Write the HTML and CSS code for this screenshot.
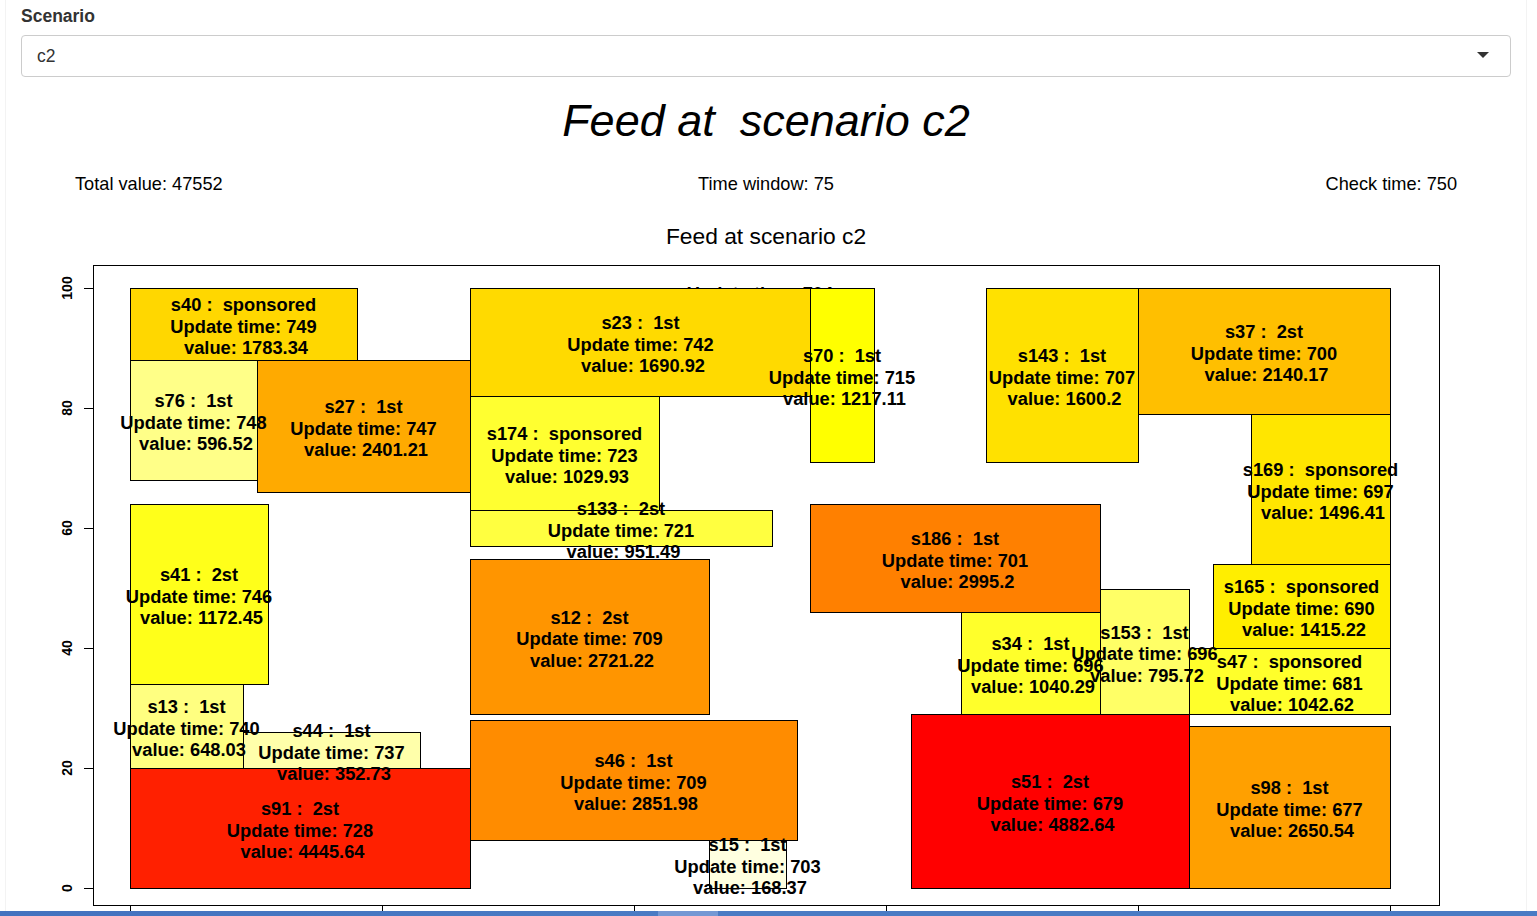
FILE: index.html
```html
<!DOCTYPE html>
<html>
<head>
<meta charset="utf-8">
<title>Feed at scenario c2</title>
<link rel="stylesheet" href="styles.css">
</head>
<body>
<div class="page">
  <label class="field-label">Scenario</label>
  <div class="select"><span class="select-value">c2</span><span class="caret"></span></div>
  <h2 class="title">Feed at  scenario c2</h2>
  <div class="stats">
    <span class="stat-left">Total value: 47552</span>
    <span class="stat-mid">Time window: 75</span>
    <span class="stat-right">Check time: 750</span>
  </div>
  <svg class="plot" viewBox="21 200 1490 711" width="1490" height="711" xmlns="http://www.w3.org/2000/svg">
    <text class="ptitle" x="766" y="244">Feed at scenario c2</text>
    <text class="lbl" x="760" y="300">Update time: 704</text>
    <g class="rects">
      <rect x="130.5" y="288.5" width="227" height="72" fill="#FFD700"/>
      <rect x="130.5" y="360.5" width="127" height="120" fill="#FFFF88"/>
      <rect x="257.5" y="360.5" width="213" height="132" fill="#FFAA00"/>
      <rect x="130.5" y="504.5" width="138" height="180" fill="#FFFF1A"/>
      <rect x="130.5" y="684.5" width="113" height="84" fill="#FFFF80"/>
      <rect x="243.5" y="732.5" width="177" height="36" fill="#FFFFAA"/>
      <rect x="130.5" y="768.5" width="340" height="120" fill="#FF2000"/>
      <rect x="470.5" y="288.5" width="341" height="108" fill="#FFDA00"/>
      <rect x="810.5" y="288.5" width="64" height="174" fill="#FFFF00"/>
      <rect x="470.5" y="396.5" width="189" height="114" fill="#FFFF30"/>
      <rect x="470.5" y="510.5" width="302" height="36" fill="#FFFF40"/>
      <rect x="470.5" y="559.5" width="239" height="155" fill="#FF9500"/>
      <rect x="709.5" y="840.5" width="77" height="48" fill="#FFFFE0"/>
      <rect x="470.5" y="720.5" width="327" height="120" fill="#FF8C00"/>
      <rect x="810.5" y="504.5" width="290" height="108" fill="#FF8000"/>
      <rect x="986.5" y="288.5" width="152" height="174" fill="#FFE100"/>
      <rect x="1138.5" y="288.5" width="252" height="126" fill="#FFBF00"/>
      <rect x="1251.5" y="414.5" width="139" height="150" fill="#FFE600"/>
      <rect x="1213.5" y="564.5" width="177" height="84" fill="#FFEE00"/>
      <rect x="1189.5" y="648.5" width="201" height="66" fill="#FFFF2B"/>
      <rect x="1100.5" y="589.5" width="89" height="125" fill="#FFFF66"/>
      <rect x="961.5" y="612.5" width="139" height="102" fill="#FFFF2B"/>
      <rect x="911.5" y="714.5" width="278" height="174" fill="#FF0000"/>
      <rect x="1189.5" y="726.5" width="201" height="162" fill="#FFA000"/>
    </g>
    <g class="labels">
      <text class="lbl" x="243.5" y="311"><tspan x="243.5">s40 :  sponsored</tspan><tspan x="243.5" dy="21.5">Update time: 749</tspan><tspan x="243.5" dy="21.5"> value: 1783.34</tspan></text>
      <text class="lbl" x="193.5" y="407"><tspan x="193.5">s76 :  1st</tspan><tspan x="193.5" dy="21.5">Update time: 748</tspan><tspan x="193.5" dy="21.5"> value: 596.52</tspan></text>
      <text class="lbl" x="363.5" y="413"><tspan x="363.5">s27 :  1st</tspan><tspan x="363.5" dy="21.5">Update time: 747</tspan><tspan x="363.5" dy="21.5"> value: 2401.21</tspan></text>
      <text class="lbl" x="199" y="581"><tspan x="199">s41 :  2st</tspan><tspan x="199" dy="21.5">Update time: 746</tspan><tspan x="199" dy="21.5"> value: 1172.45</tspan></text>
      <text class="lbl" x="186.5" y="713"><tspan x="186.5">s13 :  1st</tspan><tspan x="186.5" dy="21.5">Update time: 740</tspan><tspan x="186.5" dy="21.5"> value: 648.03</tspan></text>
      <text class="lbl" x="331.5" y="737"><tspan x="331.5">s44 :  1st</tspan><tspan x="331.5" dy="21.5">Update time: 737</tspan><tspan x="331.5" dy="21.5"> value: 352.73</tspan></text>
      <text class="lbl" x="300" y="815"><tspan x="300">s91 :  2st</tspan><tspan x="300" dy="21.5">Update time: 728</tspan><tspan x="300" dy="21.5"> value: 4445.64</tspan></text>
      <text class="lbl" x="640.5" y="329"><tspan x="640.5">s23 :  1st</tspan><tspan x="640.5" dy="21.5">Update time: 742</tspan><tspan x="640.5" dy="21.5"> value: 1690.92</tspan></text>
      <text class="lbl" x="842" y="362"><tspan x="842">s70 :  1st</tspan><tspan x="842" dy="21.5">Update time: 715</tspan><tspan x="842" dy="21.5"> value: 1217.11</tspan></text>
      <text class="lbl" x="564.5" y="440"><tspan x="564.5">s174 :  sponsored</tspan><tspan x="564.5" dy="21.5">Update time: 723</tspan><tspan x="564.5" dy="21.5"> value: 1029.93</tspan></text>
      <text class="lbl" x="621" y="515"><tspan x="621">s133 :  2st</tspan><tspan x="621" dy="21.5">Update time: 721</tspan><tspan x="621" dy="21.5"> value: 951.49</tspan></text>
      <text class="lbl" x="589.5" y="623.5"><tspan x="589.5">s12 :  2st</tspan><tspan x="589.5" dy="21.5">Update time: 709</tspan><tspan x="589.5" dy="21.5"> value: 2721.22</tspan></text>
      <text class="lbl" x="633.5" y="767"><tspan x="633.5">s46 :  1st</tspan><tspan x="633.5" dy="21.5">Update time: 709</tspan><tspan x="633.5" dy="21.5"> value: 2851.98</tspan></text>
      <text class="lbl" x="747.5" y="851"><tspan x="747.5">s15 :  1st</tspan><tspan x="747.5" dy="21.5">Update time: 703</tspan><tspan x="747.5" dy="21.5"> value: 168.37</tspan></text>
      <text class="lbl" x="955" y="545"><tspan x="955">s186 :  1st</tspan><tspan x="955" dy="21.5">Update time: 701</tspan><tspan x="955" dy="21.5"> value: 2995.2</tspan></text>
      <text class="lbl" x="1062" y="362"><tspan x="1062">s143 :  1st</tspan><tspan x="1062" dy="21.5">Update time: 707</tspan><tspan x="1062" dy="21.5"> value: 1600.2</tspan></text>
      <text class="lbl" x="1264" y="338"><tspan x="1264">s37 :  2st</tspan><tspan x="1264" dy="21.5">Update time: 700</tspan><tspan x="1264" dy="21.5"> value: 2140.17</tspan></text>
      <text class="lbl" x="1320.5" y="476"><tspan x="1320.5">s169 :  sponsored</tspan><tspan x="1320.5" dy="21.5">Update time: 697</tspan><tspan x="1320.5" dy="21.5"> value: 1496.41</tspan></text>
      <text class="lbl" x="1301.5" y="593"><tspan x="1301.5">s165 :  sponsored</tspan><tspan x="1301.5" dy="21.5">Update time: 690</tspan><tspan x="1301.5" dy="21.5"> value: 1415.22</tspan></text>
      <text class="lbl" x="1289.5" y="668"><tspan x="1289.5">s47 :  sponsored</tspan><tspan x="1289.5" dy="21.5">Update time: 681</tspan><tspan x="1289.5" dy="21.5"> value: 1042.62</tspan></text>
      <text class="lbl" x="1144.5" y="638.5"><tspan x="1144.5">s153 :  1st</tspan><tspan x="1144.5" dy="21.5">Update time: 696</tspan><tspan x="1144.5" dy="21.5"> value: 795.72</tspan></text>
      <text class="lbl" x="1030.5" y="650"><tspan x="1030.5">s34 :  1st</tspan><tspan x="1030.5" dy="21.5">Update time: 696</tspan><tspan x="1030.5" dy="21.5"> value: 1040.29</tspan></text>
      <text class="lbl" x="1050" y="788"><tspan x="1050">s51 :  2st</tspan><tspan x="1050" dy="21.5">Update time: 679</tspan><tspan x="1050" dy="21.5"> value: 4882.64</tspan></text>
      <text class="lbl" x="1289.5" y="794"><tspan x="1289.5">s98 :  1st</tspan><tspan x="1289.5" dy="21.5">Update time: 677</tspan><tspan x="1289.5" dy="21.5"> value: 2650.54</tspan></text>
    </g>
    <rect class="box" x="93.5" y="265.5" width="1346" height="640"/>
    <path class="ticks" d="M84 288.5H93M84 408.5H93M84 528.5H93M84 648.5H93M84 768.5H93M84 888.5H93M130.5 906V912M382.5 906V912M634.5 906V912M886.5 906V912M1138.5 906V912M1390.5 906V912"/>
    <text class="ax" transform="translate(72 288) rotate(-90)">100</text>
    <text class="ax" transform="translate(72 408) rotate(-90)">80</text>
    <text class="ax" transform="translate(72 528) rotate(-90)">60</text>
    <text class="ax" transform="translate(72 648) rotate(-90)">40</text>
    <text class="ax" transform="translate(72 768) rotate(-90)">20</text>
    <text class="ax" transform="translate(72 888) rotate(-90)">0</text>
  </svg>
</div>
<div class="taskbar"></div>
</body>
</html>
```

FILE: styles.css
```css
html, body {
  margin: 0;
  padding: 0;
  height: 916px;
  overflow: hidden;
  background: #fff;
}
body {
  font-family: "Liberation Sans", Arial, sans-serif;
  color: #000;
}
.page {
  height: 911px;
  box-sizing: border-box;
  margin: 0 10px 0 5px;
  padding: 6px 15px 0;
  border-left: 1px solid #f3f3f3;
  border-right: 1px solid #f3f3f3;
  display: flex;
  flex-direction: column;
}
.field-label {
  display: block;
  height: 20px;
  line-height: 20px;
  margin-bottom: 9px;
  font-size: 17.5px;
  font-weight: bold;
  color: #333;
}
.select {
  height: 42px;
  box-sizing: border-box;
  border: 1px solid #ccc;
  border-radius: 4px;
  display: flex;
  align-items: center;
  justify-content: space-between;
  padding: 0 21px 0 15px;
  font-size: 17.5px;
  color: #333;
}
.caret {
  width: 0;
  height: 0;
  margin-top: -2px;
  border-left: 6.5px solid transparent;
  border-right: 6.5px solid transparent;
  border-top: 6px solid #333;
}
.title {
  margin: 18px 0 0;
  height: 52px;
  line-height: 52px;
  text-align: center;
  font-size: 45px;
  font-style: italic;
  font-weight: normal;
  white-space: pre;
}
.stats {
  margin-top: 26px;
  padding: 0 54px;
  display: grid;
  grid-template-columns: 1fr auto 1fr;
  font-size: 18.2px;
  line-height: 22px;
  height: 22px;
}
.stat-left { justify-self: start; }
.stat-mid { justify-self: center; }
.stat-right { justify-self: end; }
.plot {
  display: block;
  margin-top: 5px;
  width: 1490px;
  height: 711px;
  flex: none;
}
.plot .ptitle {
  font-family: "Liberation Sans", Arial, sans-serif;
  font-size: 22.8px;
  text-anchor: middle;
  fill: #000;
}
.plot .rects rect {
  stroke: #000;
  stroke-width: 1;
  shape-rendering: crispEdges;
}
.plot .lbl {
  font-family: "Liberation Sans", Arial, sans-serif;
  font-size: 18.3px;
  font-weight: bold;
  text-anchor: middle;
  white-space: pre;
  fill: #000;
}
.plot .box {
  fill: none;
  stroke: #000;
  stroke-width: 1;
  shape-rendering: crispEdges;
}
.plot .ticks {
  fill: none;
  stroke: #000;
  stroke-width: 1;
  shape-rendering: crispEdges;
}
.plot .ax {
  font-family: "Liberation Sans", Arial, sans-serif;
  font-size: 14px;
  font-weight: bold;
  text-anchor: middle;
  fill: #000;
}
.taskbar {
  height: 5px;
  background: linear-gradient(to right, #4372bf 0, #4a7bc4 658px, #7498d4 658px, #7498d4 718px, #4a7bc4 718px, #4a7bc4 100%);
}
```
